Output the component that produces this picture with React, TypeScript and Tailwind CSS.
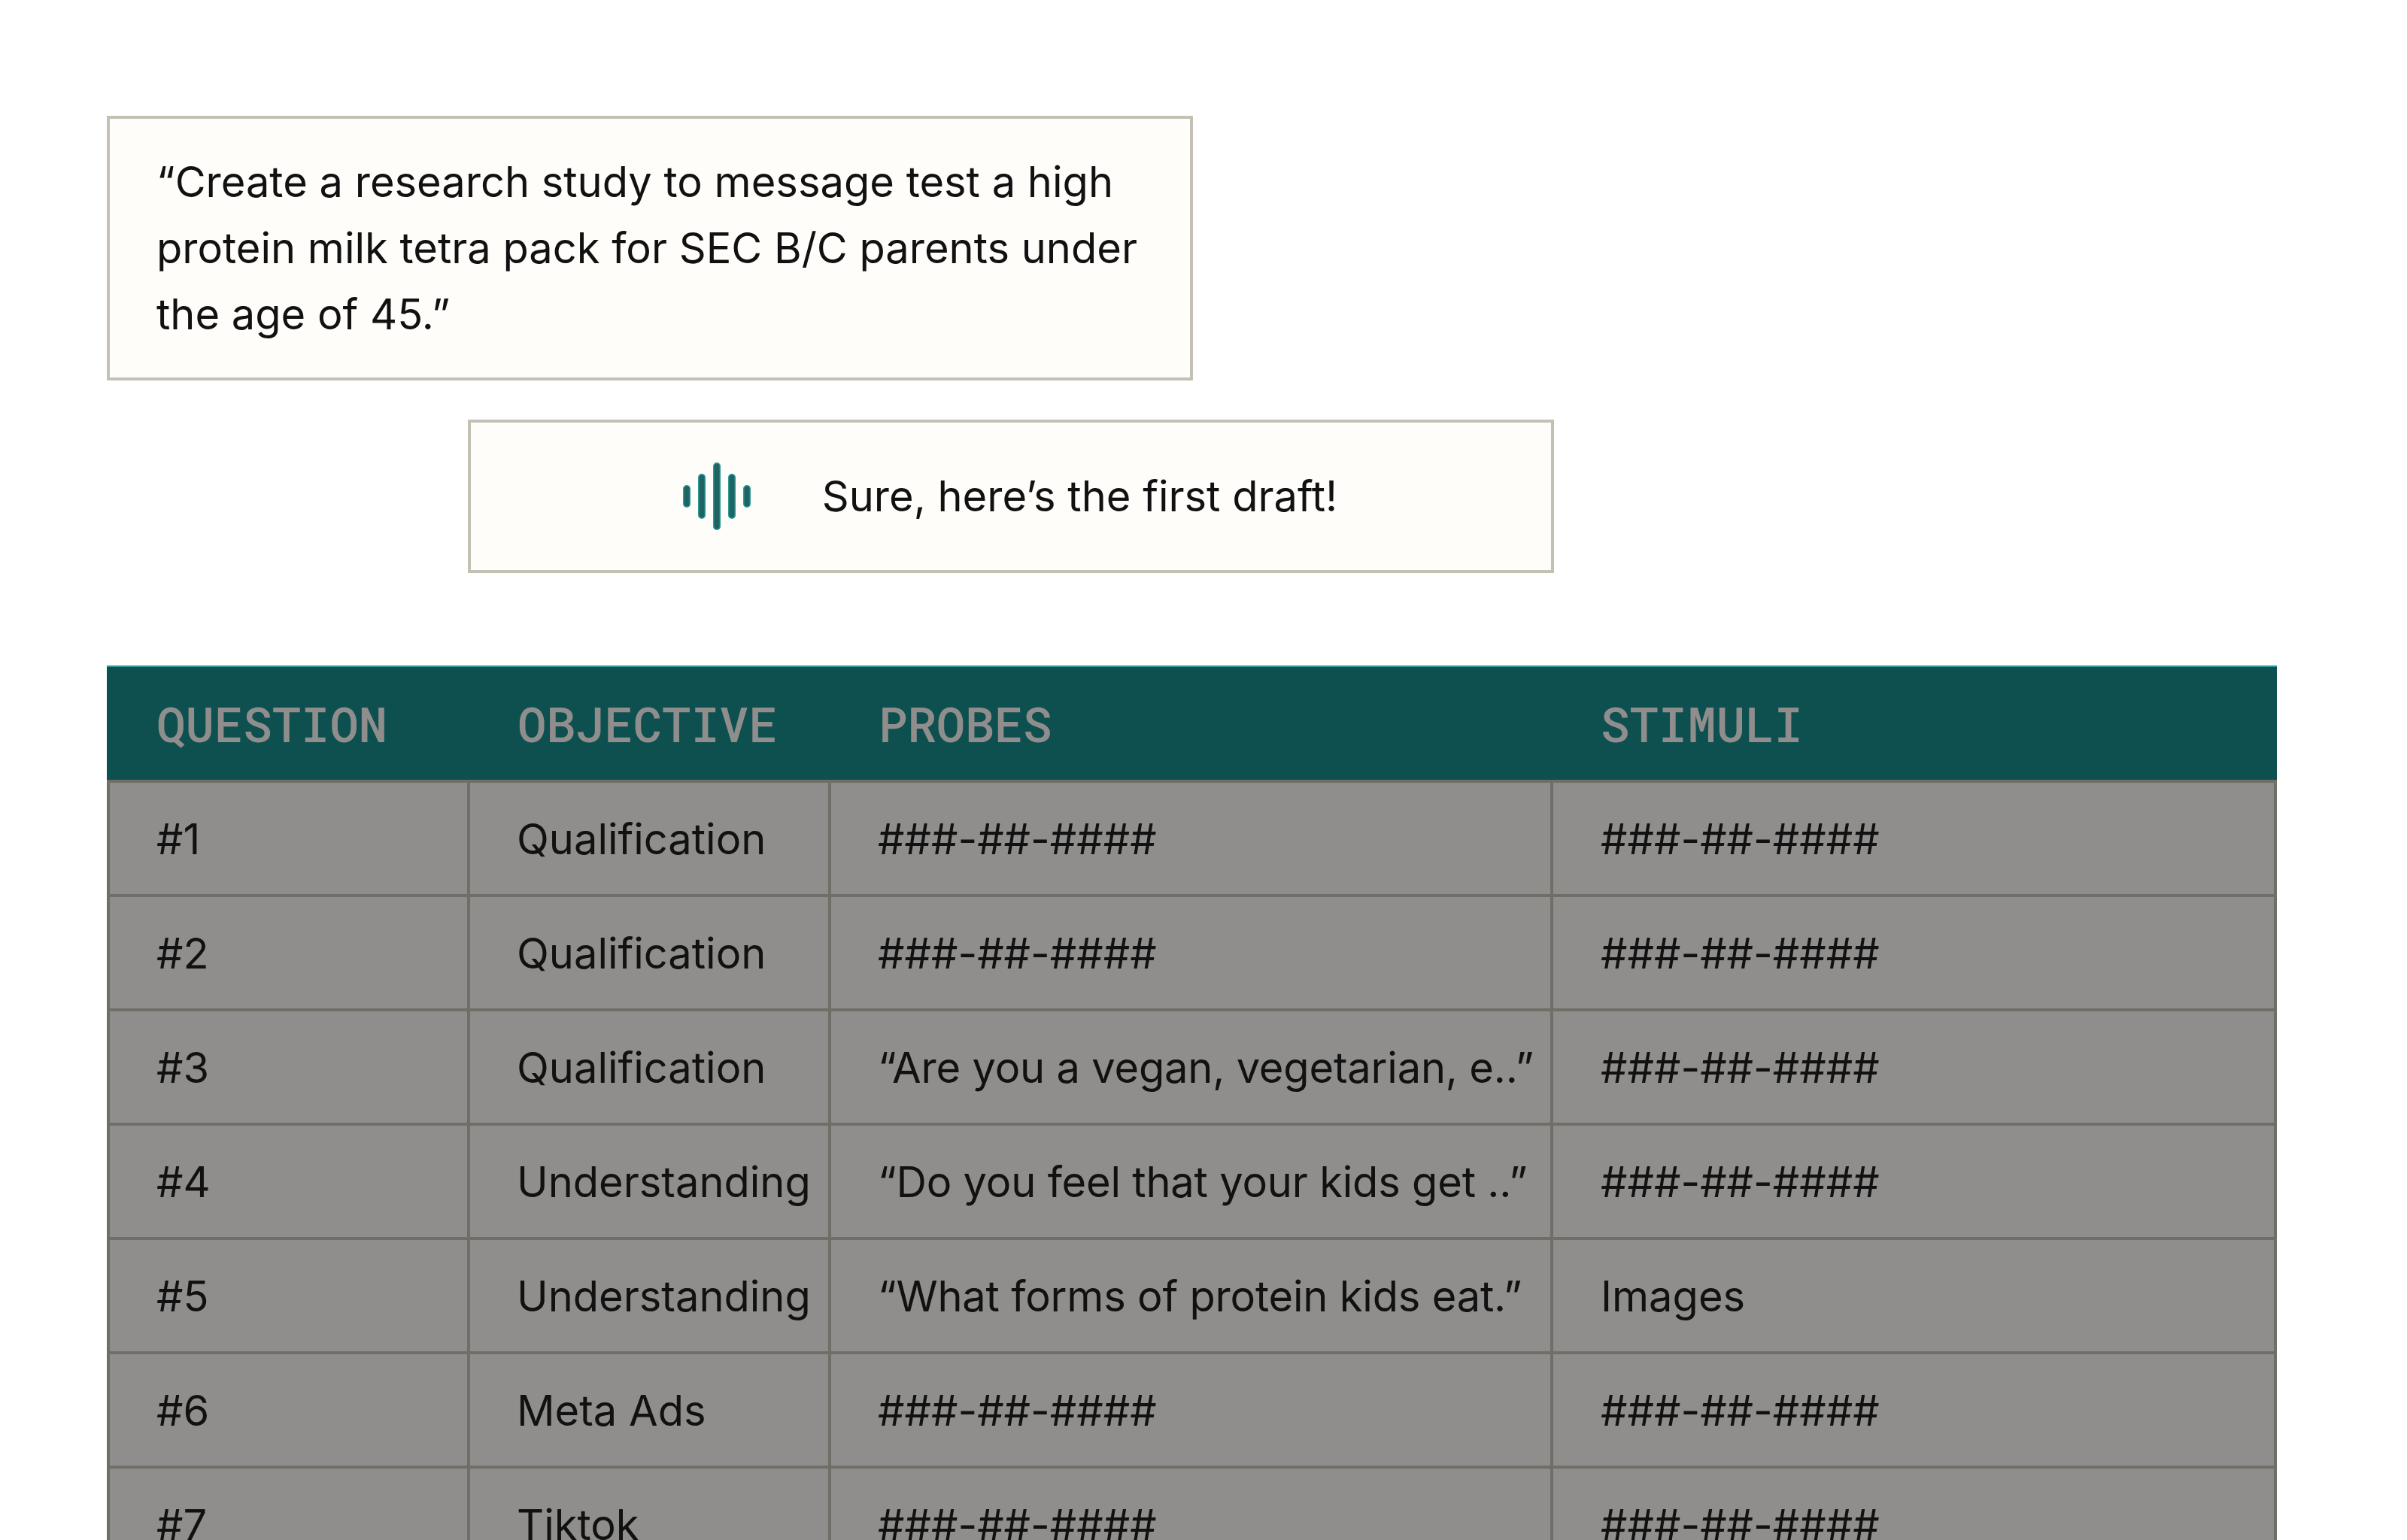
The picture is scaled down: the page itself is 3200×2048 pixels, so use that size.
const rows = [
  { id: "#1", objective: "Qualification", probes: "###-##-####", stimuli: "###-##-####" },
  { id: "#2", objective: "Qualification", probes: "###-##-####", stimuli: "###-##-####" },
  { id: "#3", objective: "Qualification", probes: "“Are you a vegan, vegetarian, e..”", stimuli: "###-##-####" },
  { id: "#4", objective: "Understanding", probes: "“Do you feel that your kids get ..”", stimuli: "###-##-####" },
  { id: "#5", objective: "Understanding", probes: "“What forms of protein kids eat.”", stimuli: "Images" },
  { id: "#6", objective: "Meta Ads", probes: "###-##-####", stimuli: "###-##-####" },
  { id: "#7", objective: "Tiktok", probes: "###-##-####", stimuli: "###-##-####" },
];

const headers = ["QUESTION", "OBJECTIVE", "PROBES", "STIMULI"];

const WaveIcon = () => (
  <svg width="90" height="92" viewBox="0 0 90 92" fill="none" strokeLinecap="round">
    <g stroke="#2a9c98" strokeWidth="10">
      <line x1="5" y1="36" x2="5" y2="56" />
      <line x1="25" y1="21" x2="25" y2="71" />
      <line x1="45" y1="6" x2="45" y2="86" />
      <line x1="65" y1="21" x2="65" y2="71" />
      <line x1="85" y1="36" x2="85" y2="56" />
    </g>
    <g stroke="#1f6362" strokeWidth="7">
      <line x1="5" y1="36" x2="5" y2="56" />
      <line x1="25" y1="21" x2="25" y2="71" />
      <line x1="45" y1="6" x2="45" y2="86" />
      <line x1="65" y1="21" x2="65" y2="71" />
      <line x1="85" y1="36" x2="85" y2="56" />
    </g>
  </svg>
);

export default function App() {
  return (
    <div className="h-[2048px] w-[3200px] overflow-hidden bg-white pt-[154px] pl-[142px] font-['Inter',sans-serif] text-[56px] text-[#111111]">
      <div className="w-[1444px] border-4 border-[#c4c1b4] bg-[#fefdfa] py-[40px] pl-[62px] leading-[88px]">
        “Create a research study to message test a high protein milk tetra pack for SEC B/C parents under the age of 45.”
      </div>

      <div className="mt-[52px] ml-[480px] flex h-[204px] w-[1444px] items-center justify-center gap-[95px] border-4 border-[#c4c1b4] bg-[#fefdfa] pr-[2px]">
        <WaveIcon />
        <span>Sure, here’s the first draft!</span>
      </div>

      <div className="mt-[123px] w-[2885px]">
        <div className="grid h-[152px] grid-cols-[483px_480px_960px_962px] items-center border-t-2 border-[#2a9c98] bg-[#0e5050] font-['Roboto_Mono',monospace] text-[64px] font-medium text-[#8f8e8c]">
          {headers.map((h, i) => (
            <div key={h} className={i === 0 ? "pl-[66px]" : "pl-[63px]"}>
              {h}
            </div>
          ))}
        </div>
        {rows.map((row) => (
          <div
            key={row.id}
            className="grid h-[152px] grid-cols-[479px_480px_960px_958px] border-x-4 border-t-4 border-[#6f6f68] bg-[#8f8e8c]"
          >
            <div className="flex items-center border-r-4 border-[#6f6f68] pt-[2px] pl-[62px]">{row.id}</div>
            <div className="flex items-center border-r-4 border-[#6f6f68] pt-[2px] pl-[62px]">{row.objective}</div>
            <div
              className={
                row.probes.startsWith("“")
                  ? "flex items-center border-r-4 border-[#6f6f68] pt-[2px] pl-[62px] tracking-[-0.2px]"
                  : "flex items-center border-r-4 border-[#6f6f68] pt-[2px] pl-[62px]"
              }
            >
              {row.probes}
            </div>
            <div className="flex items-center pt-[2px] pl-[63px]">{row.stimuli}</div>
          </div>
        ))}
      </div>
    </div>
  );
}
